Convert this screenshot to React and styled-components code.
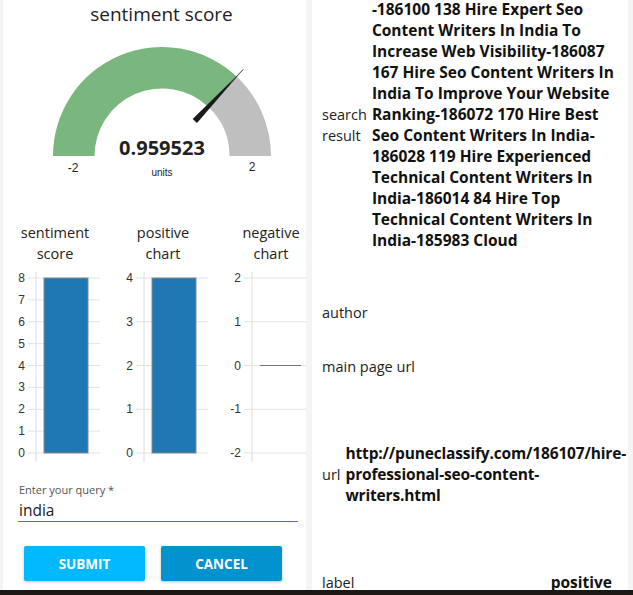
import React from "react";
import styled, { createGlobalStyle } from "styled-components";

const GlobalStyle = createGlobalStyle`
  html, body {
    margin: 0;
    padding: 0;
    background: #f4f4f4;
    font-family: "Open Sans", "Liberation Sans", sans-serif;
    color: #222;
  }
`;

const Page = styled.div`
  width: 633px;
  height: 595px;
  overflow: hidden;
`;

const Main = styled.div`
  display: flex;
  height: 590px;
  overflow: hidden;
  background: #f4f4f4;
`;

const LeftPanel = styled.div`
  width: 303px;
  margin-left: 3px;
  background: #fff;
  overflow: hidden;
  display: flex;
  flex-direction: column;
`;

const GaugeTitle = styled.div`
  height: 28px;
  line-height: 28px;
  text-align: center;
  font-size: 19px;
  padding-left: 14px;
  color: #222;
`;

const ChartRow = styled.div`
  display: flex;
  margin-top: 32px;
`;

const ChartCol = styled.div`
  flex: 0 0 108px;
  display: flex;
  flex-direction: column;
`;

const ChartTitle = styled.div`
  height: 42px;
  line-height: 21px;
  text-align: center;
  font-size: 14.5px;
  padding-right: 4px;
`;

const QueryForm = styled.div`
  margin-top: 16px;
  padding-left: 15px;
  display: flex;
  flex-direction: column;
`;

const FieldLabel = styled.label`
  font-size: 11px;
  line-height: 16px;
  color: #555;
  padding-left: 1px;
`;

const FieldInput = styled.input`
  width: 279px;
  height: 22px;
  margin-top: 1px;
  padding: 0 0 0 1px;
  border: none;
  border-bottom: 1px solid #1f8bcb;
  outline: none;
  font-family: "Open Sans", sans-serif;
  font-size: 15.5px;
  color: #222;
  background: transparent;
`;

const ButtonRow = styled.div`
  display: flex;
  gap: 16px;
  margin-top: 24px;
  padding-left: 6px;
`;

const ActionButton = styled.button`
  width: 121px;
  height: 35px;
  border: none;
  border-radius: 2px;
  background: ${(p) => (p.$tone === "dark" ? "#0093cd" : "#00b9fe")};
  color: #fff;
  font-family: "Open Sans", sans-serif;
  font-weight: 700;
  font-size: 13.5px;
  box-shadow: 0 1px 3px rgba(0, 0, 0, 0.25);
  cursor: pointer;
`;

const RightPanel = styled.div`
  width: 316px;
  margin-left: 6px;
  background: #fff;
  display: flex;
  flex-direction: column;
  overflow: hidden;
`;

const InfoRow = styled.div`
  display: flex;
  align-items: center;
  justify-content: ${(p) => (p.$spread ? "space-between" : "flex-start")};
  margin-top: ${(p) => p.$gap}px;
  padding-left: 10px;
  padding-right: ${(p) => (p.$spread ? 16 : 1)}px;
`;

const InfoLabel = styled.div`
  flex: 0 0 auto;
  width: ${(p) => (p.$tight ? "min-content" : "auto")};
  font-size: 14.5px;
  line-height: 21px;
  padding-right: 5px;
  color: #222;
`;

const InfoValue = styled.div`
  flex: 1 1 auto;
  min-width: 0;
  font-size: 15.5px;
  font-weight: 700;
  line-height: 21px;
  color: #111;
  letter-spacing: ${(p) => (p.$compact ? "-0.16px" : "normal")};
  ${(p) => p.$spread && "flex: 0 0 auto;"}
`;

const FooterStrip = styled.div`
  height: 5px;
  background: #1d1713;
`;

const GREEN = "#7ab77e";
const GREY = "#bfbfbf";

function arcPath(cx, cy, r0, r1, a0, a1) {
  // angles in radians measured from the left, going over the top
  const p = (r, a) => [cx - r * Math.cos(a), cy - r * Math.sin(a)];
  const [x0, y0] = p(r1, a0);
  const [x1, y1] = p(r1, a1);
  const [x2, y2] = p(r0, a1);
  const [x3, y3] = p(r0, a0);
  const large = a1 - a0 > Math.PI ? 1 : 0;
  return `M${x0} ${y0} A${r1} ${r1} 0 ${large} 1 ${x1} ${y1} L${x2} ${y2} A${r0} ${r0} 0 ${large} 0 ${x3} ${y3} Z`;
}

const Gauge = ({ value, min, max }) => {
  const cx = 159;
  const cy = 128;
  const frac = (value - min) / (max - min);
  const ang = frac * Math.PI;
  const dx = -Math.cos(ang);
  const dy = -Math.sin(ang);
  const px = -dy;
  const py = dx;
  const b = 48;
  const t = 119;
  const w = 3;
  const needle = [
    [cx + dx * b + px * w, cy + dy * b + py * w],
    [cx + dx * b - px * w, cy + dy * b - py * w],
    [cx + dx * t, cy + dy * t],
  ]
    .map((q) => q.join(","))
    .join(" ");
  return (
    <svg width="303" height="162" viewBox="0 0 303 162">
      <path d={arcPath(cx, cy, 67.5, 109, 0, ang)} fill={GREEN} />
      <path d={arcPath(cx, cy, 67.5, 109, ang, Math.PI)} fill={GREY} />
      <polygon points={needle} fill="#1a1a1a" />
      <line
        x1={cx + dx * 100}
        y1={cy + dy * 100}
        x2={cx + dx * t}
        y2={cy + dy * t}
        stroke="#555"
        strokeWidth="1"
      />
      <text
        x={cx}
        y={cy - 1}
        textAnchor="middle"
        fontFamily="Open Sans, sans-serif"
        fontWeight="700"
        fontSize="20"
        fill="#222"
      >
        {value}
      </text>
      <text x={cx} y={cy + 20} textAnchor="middle" fontFamily="Liberation Sans, sans-serif" fontSize="10" fill="#222">
        units
      </text>
      <text x={70} y={cy + 16} textAnchor="middle" fontFamily="Liberation Sans, sans-serif" fontSize="12" fill="#222">
        {min}
      </text>
      <text x={249} y={cy + 15} textAnchor="middle" fontFamily="Liberation Sans, sans-serif" fontSize="12" fill="#222">
        {max}
      </text>
    </svg>
  );
};

const BarChart = ({ ticks, bar, zeroLine }) => {
  const axisX = 33;
  const top = 14;
  const bottom = 189;
  const step = (bottom - top) / (ticks.length - 1);
  const yOf = (i) => top + i * step;
  return (
    <svg width="108" height="202" viewBox="0 0 108 202">
      <line x1={axisX} y1={8} x2={axisX} y2={198} stroke="#ddd" strokeWidth="1" />
      {ticks.map((tk, i) => (
        <g key={tk}>
          <line x1={axisX - 8} y1={yOf(i)} x2={axisX + 64} y2={yOf(i)} stroke="#e2e2e2" strokeWidth="1" />
          <text
            x={axisX - 11}
            y={yOf(i) + 4}
            textAnchor="end"
            fontFamily="Liberation Sans, sans-serif"
            fontSize="12"
            fill="#333"
          >
            {tk}
          </text>
        </g>
      ))}
      {bar && (
        <rect x={axisX + 8} y={top} width={44} height={bottom - top} fill="#1f77b4" stroke="#8a8a8a" strokeWidth="1" />
      )}
      {zeroLine && (
        <line x1={axisX + 8} y1={yOf(2)} x2={axisX + 49} y2={yOf(2)} stroke="#777" strokeWidth="1" />
      )}
    </svg>
  );
};

const charts = [
  { title: ["sentiment", "score"], ticks: [8, 7, 6, 5, 4, 3, 2, 1, 0], bar: true },
  { title: ["positive", "chart"], ticks: [4, 3, 2, 1, 0], bar: true },
  { title: ["negative", "chart"], ticks: [2, 1, 0, -1, -2], zeroLine: true },
];

const searchText =
  "-186100 138 Hire Expert Seo Content Writers In India To Increase Web Visibility-186087 167 Hire Seo Content Writers In India To Improve Your Website Ranking-186072 170 Hire Best Seo Content Writers In India-186028 119 Hire Experienced Technical Content Writers In India-186014 84 Hire Top Technical Content Writers In India-185983 Cloud";

export default function App() {
  return (
    <Page>
      <GlobalStyle />
      <Main>
        <LeftPanel>
          <GaugeTitle>sentiment score</GaugeTitle>
          <Gauge value={0.959523} min={-2} max={2} />
          <ChartRow>
            {charts.map((c) => (
              <ChartCol key={c.title.join(" ")}>
                <ChartTitle>
                  {c.title[0]}
                  <br />
                  {c.title[1]}
                </ChartTitle>
                <BarChart ticks={c.ticks} bar={c.bar} zeroLine={c.zeroLine} />
              </ChartCol>
            ))}
          </ChartRow>
          <QueryForm>
            <FieldLabel htmlFor="query">Enter your query *</FieldLabel>
            <FieldInput id="query" value="india" readOnly />
            <ButtonRow>
              <ActionButton $tone="light">SUBMIT</ActionButton>
              <ActionButton $tone="dark">CANCEL</ActionButton>
            </ButtonRow>
          </QueryForm>
        </LeftPanel>
        <RightPanel>
          <InfoRow $gap={-1}>
            <InfoLabel $tight>search result</InfoLabel>
            <InfoValue>{searchText}</InfoValue>
          </InfoRow>
          <InfoRow $gap={51}>
            <InfoLabel>author</InfoLabel>
          </InfoRow>
          <InfoRow $gap={33}>
            <InfoLabel>main page url</InfoLabel>
          </InfoRow>
          <InfoRow $gap={66}>
            <InfoLabel $tight>url</InfoLabel>
            <InfoValue $compact>http://puneclassify.com/186107/hire-professional-seo-content-writers.html</InfoValue>
          </InfoRow>
          <InfoRow $gap={66} $spread>
            <InfoLabel>label</InfoLabel>
            <InfoValue $spread>positive</InfoValue>
          </InfoRow>
        </RightPanel>
      </Main>
      <FooterStrip />
    </Page>
  );
}
